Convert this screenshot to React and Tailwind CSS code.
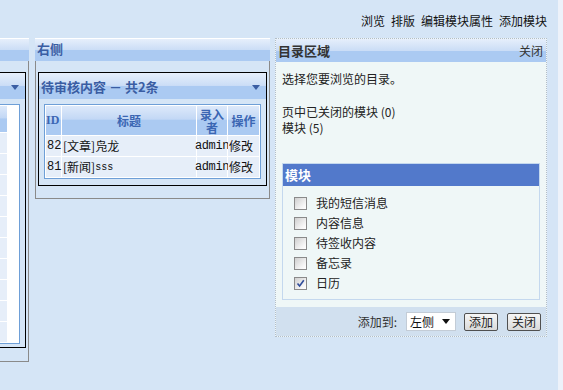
import React from "react";

const Tri = ({ color = "#3a5da3" }) => (
  <svg width="8" height="5" viewBox="0 0 8 5" className="shrink-0">
    <path d="M0 0 H8 L4 5 Z" fill={color} />
  </svg>
);

const Box = ({ checked }) => (
  <span className="flex h-[13px] w-[13px] shrink-0 items-center justify-center border border-[#8a8a8a] bg-[linear-gradient(135deg,#cfcfcf,#f7f7f7_75%,#ffffff)]">
    {checked && (
      <svg width="9" height="9" viewBox="0 0 9 9">
        <path d="M1.5 4.5 L3.6 7 L7.8 1.2" stroke="#2f4c9a" strokeWidth="1.6" fill="none" />
      </svg>
    )}
  </span>
);

const Panel = ({ title, children, bodyClass }) => (
  <div className="w-[235px] shrink-0">
    <div className="h-[23px] border-t border-white bg-[linear-gradient(to_bottom,#e6effb,#cbddf6_50%,#abcaf2_52%,#abcaf2)] pl-[2px] text-[13px] font-bold leading-[20px] text-[#3a5da3]">
      {title}
    </div>
    <div className={"border border-t-0 border-[#8a8a8a] px-[2px] pt-[11px] " + bodyClass}>{children}</div>
  </div>
);

const InnerHead = ({ title }) => (
  <div className="flex h-[26px] items-center justify-between bg-[linear-gradient(to_bottom,#e6effb,#cbddf6_48%,#abcaf2_50%,#abcaf2)] pl-[2px] pr-[6px] pt-[2px] text-[13px] font-bold text-[#3a5da3]">
    <span>{title}</span>
    <Tri />
  </div>
);

const th =
  "flex items-center justify-center bg-[linear-gradient(to_bottom,#dde9fa,#c3d8f5_45%,#abcaf2_50%,#abcaf2)] text-[12px] font-bold leading-[13px] text-[#3b66b3]";
const td = "flex h-[20px] items-center bg-[#e6eef9] px-[1px] text-[12px] text-[#111]";

const rows = [
  { id: "82", title: "[文章]", rest: "凫龙" },
  { id: "81", title: "[新闻]", rest: "sss", mono: true },
];

export default function App() {
  return (
    <div className="relative flex h-[390px] w-[563px] overflow-hidden bg-[#d5e5f6] font-['Noto_Sans_CJK_SC',sans-serif] text-[12px] text-[#222]">
      <div className="flex w-[558px] flex-col">
        <div className="flex h-[38px] items-center justify-end gap-[6px] pr-[11px] pt-[4px] text-[12px] text-[#111]">
          <span>浏览</span>
          <span>排版</span>
          <span>编辑模块属性</span>
          <span>添加模块</span>
        </div>

        <div className="flex items-start">
          {/* left column, cut off */}
          <div className="flex w-[29px] shrink-0 justify-end overflow-hidden">
            <Panel title="" bodyClass="pb-[13px]">
              <div className="border border-black">
                <InnerHead title="" />
                <div className="px-[5px] pt-[5px] pb-[3px]">
                  <div className="grid grid-cols-[15px_104px_30px_50px] gap-[1px] border border-[#6e9fd7] bg-white p-[1px]">
                    <div className={th + " h-[26px]"} />
                    <div className={th} />
                    <div className={th} />
                    <div className={th + " justify-start pl-[14px]"}>
                      <span className="text-[13px]">发表</span>
                    </div>
                    {Array.from({ length: 10 }).map((_, i) => (
                      <React.Fragment key={i}>
                        <div className={td + " h-[19px]"} />
                        <div className={td + " h-[19px]"} />
                        <div className={td + " h-[19px]"} />
                        <div className={td + " h-[19px]"} />
                      </React.Fragment>
                    ))}
                  </div>
                </div>
              </div>
            </Panel>
          </div>

          {/* middle */}
          <div className="ml-[6px]">
            <Panel title="右侧" bodyClass="pb-[12px]">
              <div className="border border-black">
                <InnerHead title="待审核内容 － 共2条" />
                <div className="px-[5px] pt-[5px] pb-[6px]">
                  <div className="grid grid-cols-[15px_134px_30px_31px] gap-[1px] border border-[#6e9fd7] bg-white p-[1px]">
                    <div className={th + " h-[29px] justify-start font-['Liberation_Serif',serif]"}>ID</div>
                    <div className={th}>标题</div>
                    <div className={th + " flex-col"}>
                      <div className="h-[13px] text-center leading-[13px]">录入</div>
                      <div className="h-[13px] text-center leading-[13px]">者</div>
                    </div>
                    <div className={th}>操作</div>
                    {rows.map((r) => (
                      <React.Fragment key={r.id}>
                        <div className={td + " font-['Liberation_Mono',monospace] text-[10px]"}>{r.id}</div>
                        <div className={td}>
                          <span>{r.title}</span>
                          {r.mono ? (
                            <span className="font-['Liberation_Mono',monospace] text-[10px]">{r.rest}</span>
                          ) : (
                            <span>{r.rest}</span>
                          )}
                        </div>
                        <div className={td + " justify-center px-0 font-['Liberation_Mono',monospace] text-[10px] tracking-[-0.4px]"}>
                          admin
                        </div>
                        <div className={td}>修改</div>
                      </React.Fragment>
                    ))}
                  </div>
                </div>
              </div>
            </Panel>
          </div>

          {/* right */}
          <div className="ml-[5px] w-[272px] shrink-0 border border-dotted border-[#b3bdc8] bg-[#eff7f7]">
            <div className="flex h-[23px] items-center justify-between bg-[linear-gradient(to_bottom,#e6effb,#cbddf6_50%,#abcaf2_52%,#abcaf2)] pl-[2px] pr-[3px] text-[#333]">
              <span className="text-[13px] font-bold">目录区域</span>
              <span className="text-[12px]">关闭</span>
            </div>
            <div className="px-[6px] pt-[9px] leading-[16px] text-[#222]">
              <div>选择您要浏览的目录。</div>
              <div className="h-[17px]" />
              <div>页中已关闭的模块 (0)</div>
              <div>模块 (5)</div>
              <div className="mt-[27px] w-[258px] border border-[#c4d8ee]">
                <div className="h-[22px] bg-[#5279cb] pl-[2px] text-[13px] font-bold leading-[22px] text-white">模块</div>
                <div className="pb-[6px] pt-[7px]">
                  {[
                    ["我的短信消息", false],
                    ["内容信息", false],
                    ["待签收内容", false],
                    ["备忘录", false],
                    ["日历", true],
                  ].map(([label, c]) => (
                    <div key={label} className="flex h-[20px] items-center pl-[11px]">
                      <Box checked={c} />
                      <span className="ml-[9px]">{label}</span>
                    </div>
                  ))}
                </div>
              </div>
            </div>
            <div className="mt-[7px] flex h-[29px] items-center justify-end bg-[#d1e0ef] pr-[5px] text-[#333]">
              <span>添加到:</span>
              <div className="ml-[9px] flex h-[19px] w-[50px] items-center justify-between border border-[#c3ccd6] bg-white pl-[3px] pr-[5px] text-[#111]">
                <span>左侧</span>
                <Tri color="#111" />
              </div>
              <button className="ml-[8px] flex h-[18px] w-[34px] items-center justify-center rounded-[2px] border border-[#505050] bg-[linear-gradient(to_bottom,#f6f6f6,#dadada)] text-[12px] leading-none text-[#222]">
                添加
              </button>
              <button className="ml-[9px] flex h-[18px] w-[34px] items-center justify-center rounded-[2px] border border-[#505050] bg-[linear-gradient(to_bottom,#f6f6f6,#dadada)] text-[12px] leading-none text-[#222]">
                关闭
              </button>
            </div>
          </div>
        </div>
      </div>
      <div className="w-[5px] bg-[#edf2fa]" />
    </div>
  );
}
